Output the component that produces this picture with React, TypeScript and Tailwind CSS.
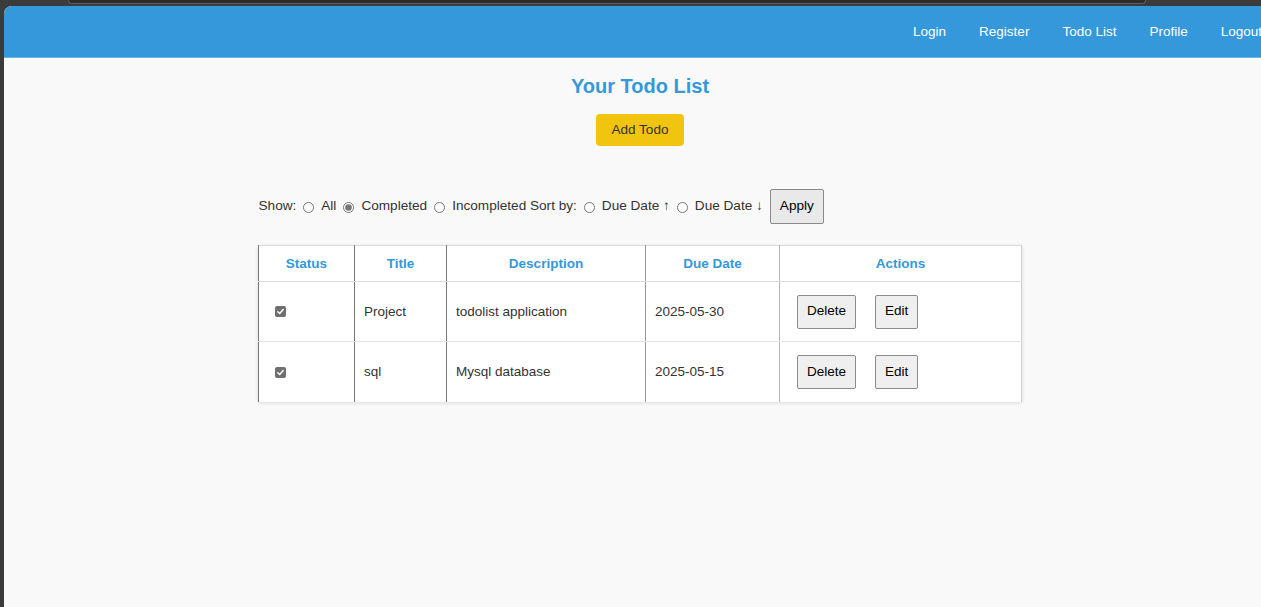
import React from "react";

const font = { fontFamily: '"Liberation Sans", Arial, sans-serif' };

function Radio({ checked = false }: { checked?: boolean }) {
  return (
    <input
      type="radio"
      readOnly
      checked={checked}
      className="block w-[11px] h-[11px] m-0 ml-[7px] mr-[7px] mt-[1px] accent-[#767676]"
    />
  );
}

function Check() {
  return (
    <span className="inline-flex items-center justify-center w-[11px] h-[11px] rounded-[2px] bg-[#6f6f6f] align-middle">
      <svg width="9" height="9" viewBox="0 0 10 10">
        <path d="M2 5.2 L4.1 7.3 L8 2.8" fill="none" stroke="#fff" strokeWidth="1.6" strokeLinecap="round" strokeLinejoin="round" />
      </svg>
    </span>
  );
}

const rows = [
  { title: "Project", desc: "todolist application", due: "2025-05-30" },
  { title: "sql", desc: "Mysql database", due: "2025-05-15" },
];

export default function App() {
  return (
    <div className="w-[1261px] h-[607px] overflow-hidden bg-[#3b3b3b]" style={font}>
      <div className="h-[6px] flex">
        <div className="ml-[68px] w-[1078px] h-[4px] rounded-b-[6px] border border-t-0 border-[#5c5c5c] bg-[#2c2c2c]" />
      </div>
      <div className="ml-[4px] w-[1272px] h-[601px] rounded-tl-[8px] overflow-hidden bg-[#f9f9f9] flex flex-col">
        <nav className="h-[52px] shrink-0 bg-[#3498db] flex items-center justify-end pr-[14px] pt-[1px] gap-[33px] text-white text-[13.5px] border-b border-[#6cb6e8]">
          <span>Login</span>
          <span>Register</span>
          <span>Todo List</span>
          <span>Profile</span>
          <span>Logout</span>
        </nav>
        <main className="flex flex-col items-center">
          <h1 className="mt-[17px] text-[20px] leading-[23px] font-bold text-[#3498db]">Your Todo List</h1>
          <button className="mt-[16px] h-[32px] px-[16px] rounded-[4px] bg-[#f1c40f] text-[13.5px] text-[#333]">Add Todo</button>
          <div className="w-[763px] mt-[43px] text-[13.6px] text-[#333] flex items-center whitespace-pre">
            <span>Show:</span>
            <Radio />
            <span>All</span>
            <Radio checked />
            <span>Completed</span>
            <Radio />
            <span>Incompleted Sort by:</span>
            <Radio />
            <span>Due Date ↑</span>
            <Radio />
            <span>Due Date ↓</span>
            <button className="ml-[7px] h-[35px] px-[9px] border border-[#8a8a8a] bg-[#e9e9e9] text-black text-[13.6px] rounded-[2px]">Apply</button>
          </div>
          <table className="mt-[21px] w-[763px] table-fixed border-collapse bg-white shadow-[0_1px_4px_rgba(0,0,0,0.12)] text-[13.5px] text-[#333]">
            <colgroup>
              <col className="w-[96px]" />
              <col className="w-[92px]" />
              <col className="w-[199px]" />
              <col className="w-[134px]" />
              <col className="w-[242px]" />
            </colgroup>
            <thead>
              <tr className="h-[36px] border-t border-[#dcdcdc]">
                <th className="border-l border-r border-[#777] border-b border-b-[#dcdcdc] pt-[1px] font-bold text-[#3498db]">Status</th>
                <th className="border-r border-[#777] border-b border-b-[#dcdcdc] pt-[1px] font-bold text-[#3498db]">Title</th>
                <th className="border-r border-[#999] border-b border-b-[#dcdcdc] pt-[1px] font-bold text-[#3498db]">Description</th>
                <th className="border-r border-[#b5b5b5] border-b border-b-[#dcdcdc] pt-[1px] font-bold text-[#3498db]">Due Date</th>
                <th className="border-r border-[#cfcfcf] border-b border-b-[#dcdcdc] pt-[1px] font-bold text-[#3498db]">Actions</th>
              </tr>
            </thead>
            <tbody>
              {rows.map((r, i) => (
                <tr key={i} className="h-[60px]">
                  <td className={`border-l border-r border-[#777] pl-[16px] ${i === 0 ? "border-b border-b-[#e6e6e6]" : ""}`}>
                    <Check />
                  </td>
                  <td className={`border-r border-[#777] pl-[9px] pt-[1px] ${i === 0 ? "border-b border-b-[#e6e6e6]" : ""}`}>{r.title}</td>
                  <td className={`border-r border-[#999] pl-[9px] pt-[1px] ${i === 0 ? "border-b border-b-[#e6e6e6]" : ""}`}>{r.desc}</td>
                  <td className={`border-r border-[#b5b5b5] pl-[9px] pt-[1px] ${i === 0 ? "border-b border-b-[#e6e6e6]" : ""}`}>{r.due}</td>
                  <td className={`border-r border-[#cfcfcf] ${i === 0 ? "border-b border-b-[#e6e6e6]" : ""}`}>
                    <div className="flex items-center gap-[19px] pl-[17px]">
                      <button className="h-[34px] px-[9px] border border-[#8a8a8a] bg-[#efefef] rounded-[2px] text-black text-[13.5px]">Delete</button>
                      <button className="h-[34px] px-[9px] border border-[#8a8a8a] bg-[#efefef] rounded-[2px] text-black text-[13.5px]">Edit</button>
                    </div>
                  </td>
                </tr>
              ))}
            </tbody>
          </table>
        </main>
      </div>
    </div>
  );
}
